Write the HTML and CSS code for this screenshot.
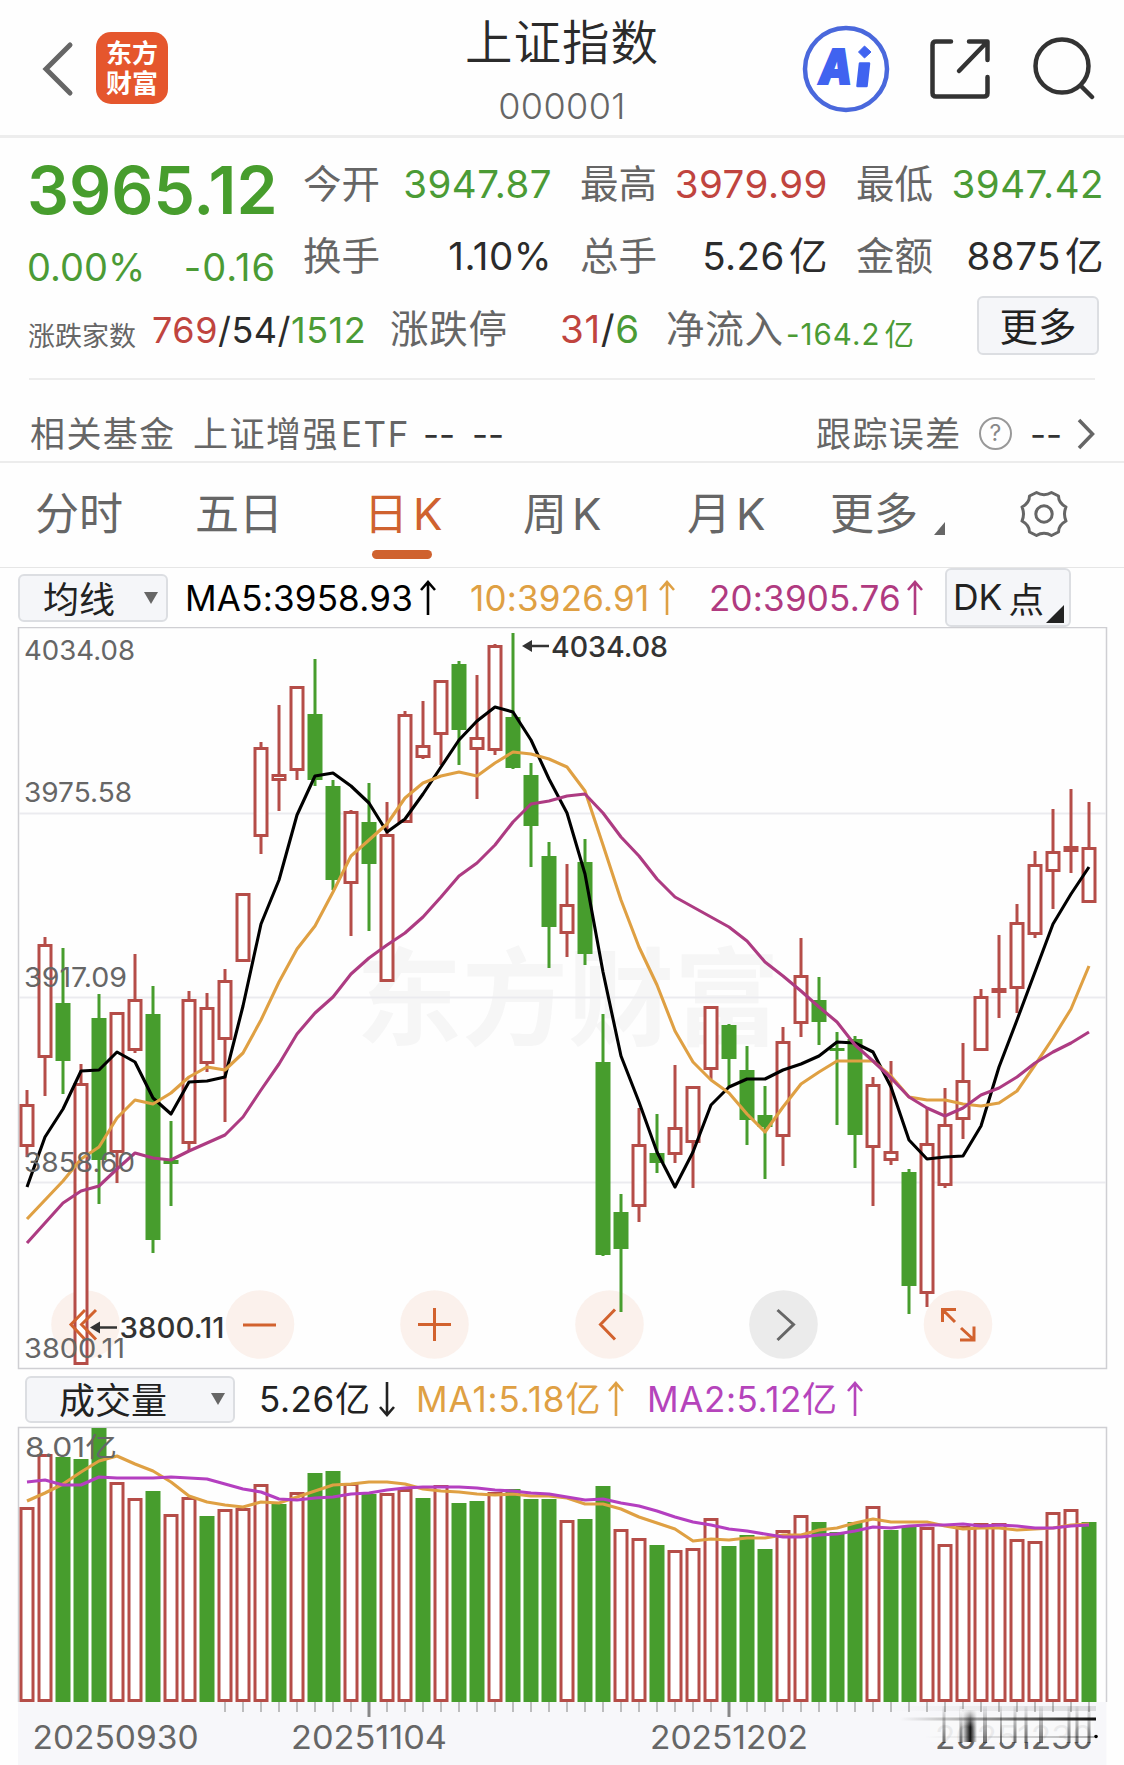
FILE: index.html
```html
<!DOCTYPE html>
<html lang="zh-CN">
<head>
<meta charset="utf-8">
<title>上证指数 000001</title>
<link rel="stylesheet" href="styles.css">
</head>
<body>
<header class="header">
  <div class="header-left">
    <svg class="back" width="34" height="56" viewBox="0 0 34 56"><path d="M29 4 5 28 29 52" fill="none" stroke="#666" stroke-width="5" stroke-linecap="round"/></svg>
    <div class="logo"><span>东方</span><span>财富</span></div>
  </div>
  <div class="title">
    <h1>上证指数</h1>
    <span class="code">000001</span>
  </div>
  <div class="header-right">
    <svg width="88" height="88" viewBox="802 25 88 88">
      <circle cx="846" cy="69" r="41" fill="#fff" stroke="#4a68dc" stroke-width="4.5"/>
      <text class="ai" x="819" y="83.500" textLength="33" lengthAdjust="spacingAndGlyphs">A</text>
      <path d="M860 63.500H869L866.500 86H857.500Z" fill="#4063f0" stroke="#4063f0" stroke-width="2.500" stroke-linejoin="round"/>
      <path d="M864.500 46 871 52 864.500 58 858.500 52Z" fill="#4063f0" stroke="#4063f0" stroke-linejoin="round"/>
    </svg>
    <svg class="share" width="64" height="64" viewBox="928 37 64 64" fill="none" stroke="#333" stroke-width="4.500" stroke-linecap="round" stroke-linejoin="round"><path d="M951 41.500H936Q932.500 41.500 932.500 45V93Q932.500 96.500 936 96.500H984Q987.500 96.500 987.500 93V77M969 41.500H987.500V60M987 42 959 71"/></svg>
    <svg class="search" width="64" height="64" viewBox="1032 36 64 64" fill="none" stroke="#333" stroke-width="4.500" stroke-linecap="round"><circle cx="1062" cy="66" r="26.500"/><path d="M1081 86 1092 97"/></svg>
  </div>
</header>

<section class="quote">
  <div class="quote-main">
    <div class="last">
      <div class="price">3965.12</div>
      <div class="change"><span class="pct">0.00%</span><span>-0.16</span></div>
    </div>
    <div class="cell"><span>今开</span><b class="down">3947.87</b></div>
    <div class="cell"><span>最高</span><b class="up">3979.99</b></div>
    <div class="cell"><span>最低</span><b class="down">3947.42</b></div>
    <div class="cell"><span>换手</span><b>1.10%</b></div>
    <div class="cell"><span>总手</span><b>5.26<i>亿</i></b></div>
    <div class="cell"><span>金额</span><b>8875<i>亿</i></b></div>
  </div>
  <div class="breadth">
    <span class="breadth-label">涨跌家数</span>
    <span class="breadth-nums"><b class="up">769</b>/54/<b class="down">1512</b></span>
    <span class="limit-label">涨跌停</span>
    <span class="limit-nums"><b class="up">31</b>/<b class="down">6</b></span>
    <span class="flow-label">净流入</span>
    <span class="flow-num">-164.2<i>亿</i></span>
    <button class="btn more">更多</button>
  </div>
</section>

<section class="fund">
  <span class="fund-label">相关基金</span>
  <span class="fund-name">上证增强<em>ETF</em></span>
  <span class="dash">--</span><span class="dash dash2">--</span>
  <span class="fund-err">跟踪误差</span>
  <span class="help">?</span>
  <span class="dash dash3">--</span>
  <svg width="20" height="34" viewBox="0 0 20 34"><path d="M3 3 16.500 17 3 31" fill="none" stroke="#666" stroke-width="3.500"/></svg>
</section>

<nav class="tabs">
  <span>分时</span><span>五日</span><span class="active">日<em>K</em></span><span>周<em>K</em></span><span>月<em>K</em></span>
  <span class="tab-more">更多<svg width="11" height="13" viewBox="0 0 11 13"><path d="M11 0V13H0Z" fill="#666"/></svg></span>
  <svg class="gear" width="50" height="50" viewBox="-25 -25 50 50" fill="none" stroke="#666" stroke-width="3" stroke-linejoin="round"><circle r="8.200"/><path d="M-7.500 -21.500Q0 -17 7.500 -21.500L14.500 -18Q14.500 -11 22 -7Q19 0 22 7Q14.500 11 14.500 18L7.500 21.500Q0 17 -7.500 21.500L-14.500 18Q-14.500 11 -22 7Q-19 0 -22 -7Q-14.500 -11 -14.500 -18Z"/></svg>
</nav>

<section class="ma-bar">
  <button class="btn select"><span>均线</span><svg width="14" height="12" viewBox="0 0 14 12"><path d="M0 0H14L7 12Z" fill="#666"/></svg></button>
  <span class="ma ma5">MA5:3958.93</span><svg class="arrow" width="16" height="36" viewBox="0 0 16 36"><path d="M8 35V2M1 10 8 2 15 10" stroke="#000"/></svg>
  <span class="ma ma10">10:3926.91</span><svg class="arrow" width="16" height="36" viewBox="0 0 16 36"><path d="M8 35V2M1 10 8 2 15 10" stroke="#dfa043"/></svg>
  <span class="ma ma20">20:3905.76</span><svg class="arrow" width="16" height="36" viewBox="0 0 16 36"><path d="M8 35V2M1 10 8 2 15 10" stroke="#b03a80"/></svg>
  <button class="btn dk"><span>DK</span><span>点</span><svg width="18" height="18" viewBox="0 0 18 18"><path d="M18 0V18H0Z" fill="#222"/></svg></button>
</section>

<svg id="kline" class="chart" width="1124" height="743" viewBox="0 627 1124 743"></svg>

<section class="vol-bar">
  <button class="btn select vol-select"><span>成交量</span><svg width="14" height="12" viewBox="0 0 14 12"><path d="M0 0H14L7 12Z" fill="#666"/></svg></button>
  <span class="ma vol">5.26<i>亿</i></span><svg class="arrow" width="16" height="36" viewBox="0 0 16 36"><path d="M8 1V34M1 26 8 34 15 26" stroke="#222"/></svg>
  <span class="ma vma1">MA1:5.18<i>亿</i></span><svg class="arrow" width="16" height="36" viewBox="0 0 16 36"><path d="M8 35V2M1 10 8 2 15 10" stroke="#dfa043"/></svg>
  <span class="ma vma2">MA2:5.12<i>亿</i></span><svg class="arrow" width="16" height="36" viewBox="0 0 16 36"><path d="M8 35V2M1 10 8 2 15 10" stroke="#b544bb"/></svg>
</section>

<svg id="volume" class="chart" width="1124" height="339" viewBox="0 1426 1124 339"></svg>
<script src="chart.js"></script>
</body>
</html>
```
FILE: styles.css
```css
* { box-sizing: border-box; }
body {
  margin: 0;
  width: 1124px;
  height: 1765px;
  overflow: hidden;
  background: #fefefe;
  color: #2b2b2b;
  font-family: Inter, "Noto Sans CJK SC", sans-serif;
  font-weight: 390;
}
b, i, em { font-weight: inherit; font-style: normal; }
svg { display: block; flex: none; }
span { white-space: nowrap; }
.up { color: #c0443e; }
.down { color: #4b9b35; }

.header {
  height: 138px;
  border-bottom: 3px solid #ededed;
  display: grid;
  grid-template-columns: 1fr 240px 1fr;
}
.header-left { display: flex; align-items: flex-start; padding: 32px 0 0 41px; }
.back { margin-top: 9px; }
.logo {
  width: 72px; height: 72px; margin-left: 21px; padding-top: 7px;
  border-radius: 15px; background: #e5562d; color: #fff;
  font-weight: 700; font-size: 26px; line-height: 30px;
  display: flex; flex-direction: column; align-items: center;
}
.title { display: flex; flex-direction: column; align-items: center; }
.title h1 { margin: 13px 0 0; font-size: 47.5px; line-height: 60px; font-weight: 350; letter-spacing: 1px; }
.code { font-size: 36px; line-height: 40px; margin-top: 13px; color: #666; font-weight: 350; letter-spacing: 0.4px; }
.header-right { display: flex; padding: 25px 28px 0 0; justify-content: flex-end; }
.share { margin: 12px 0 0 38px; }
.search { margin: 11px 0 0 40px; }
.ai { font-size: 48px; font-weight: 900; font-style: italic; fill: #4063f0; stroke: #4063f0; stroke-width: 2; }

.quote { padding: 10px 22px 0 29px; height: 243px; }
.quote-main {
  display: grid;
  grid-template-columns: 275px 247px 276px 276px;
  grid-template-rows: 72px 72px;
}
.last { grid-row: 1 / 3; padding-right: 29px; margin-left: -2px; }
.price { font-size: 66px; font-weight: 600; line-height: 85px; height: 82px; color: #479d2d; letter-spacing: 0; }
.change { display: flex; justify-content: space-between; font-size: 38px; line-height: 75px; color: #4b9b35; }
.change span + span { letter-spacing: 1px; margin-right: -1px; }
.cell { display: flex; justify-content: space-between; font-size: 38.5px; line-height: 72px; color: #666; }
.cell > span { margin-left: -1px; }
.cell:nth-child(3n+3), .cell:nth-child(3n+4) { padding-left: 30px; }
.cell b { color: #2b2b2b; letter-spacing: 0.5px; margin-right: -1px; }
.cell b.up { color: #c0443e; }
.cell b.down { color: #4b9b35; }
.cell i, .flow-num i { margin-left: 4px; }
.breadth { display: flex; height: 86px; border-bottom: 2px solid #ededed; margin: 2px 7px 0 0; line-height: 70px; font-size: 38.5px; color: #666; }
.breadth-label { font-size: 27px; width: 124px; padding-top: 8px; margin-left: -1px; }
.breadth-nums { font-size: 36px; color: #2b2b2b; width: 238px; padding-top: 1px; letter-spacing: 0.5px; }
.limit-label { width: 170px; letter-spacing: 0.7px; }
.limit-nums { color: #2b2b2b; width: 106px; letter-spacing: 0.6px; }
.flow-label { width: 120px; letter-spacing: 0.7px; }
.flow-num { font-size: 29.5px; color: #4b9b35; padding-top: 5px; letter-spacing: 1px; }
.btn {
  font-family: inherit; font-weight: inherit; color: #222; background: #f5f6f9;
  border: 2px solid #dcdee2; border-radius: 6px; padding: 0 0 3px;
  display: flex; align-items: center; flex: none;
}
.more { margin: 2px -4px 0 auto; width: 122px; height: 59px; justify-content: center; font-size: 38.5px; }

.fund {
  height: 82px; padding: 25px 28px 0 30px; border-bottom: 2px solid #ececec;
  display: flex; align-items: center; font-size: 35px; line-height: 50px; color: #666;
}
.fund-label { width: 163px; letter-spacing: 1.4px; }
.fund-name { width: 230px; letter-spacing: 1.5px; }
.fund-name em { margin-left: 2px; }
.dash { color: #333; width: 49px; font-weight: 400; }
.fund-err { margin-left: auto; width: 163px; letter-spacing: 1.4px; }
.help { width: 33px; height: 33px; border: 2px solid #999; border-radius: 50%; font-size: 23px; line-height: 29px; text-align: center; color: #888; margin-right: 18px; }
.dash3 { width: 46px; }

.tabs {
  height: 105px; border-bottom: 1px solid #e6e6e6; padding-left: 35px;
  display: grid; grid-template-columns: 160px 169px 159px 164px 143px 189px 60px;
  font-size: 44px; line-height: 102px; color: #666;
}
.tabs em { margin-left: 5px; }
.active { color: #cf622f; }
.active::after { content: ""; display: block; width: 60px; height: 9px; border-radius: 5px; background: #cf622f; margin: -15px 0 0 8px; }
.tab-more { display: flex; }
.tab-more svg { margin: 59px 0 0 16px; }
.gear { margin-top: 26px; }

.ma-bar { height: 59px; display: flex; align-items: center; padding-left: 18px; }
.select { width: 150px; height: 48px; font-size: 36px; justify-content: space-between; padding: 0 8px 3px 23px; margin-top: 1px; }
.select svg { margin-top: 2px; }
.ma { font-size: 35px; line-height: 50px; color: #000; }
.ma5 { width: 235px; margin-left: 17px; letter-spacing: 0.2px; }
.ma10 { width: 189px; margin-left: 34px; color: #dfa043; letter-spacing: 0.2px; }
.ma20 { width: 198px; margin-left: 34px; color: #b03a80; letter-spacing: 0.2px; }
.arrow path { fill: none; stroke-width: 2.6; }
.dk { width: 126px; height: 59px; margin-left: 22px; padding-left: 6px; padding-bottom: 0; font-size: 35.5px; }
.dk span + span { margin-left: 6px; }
.dk svg { margin: 33px 0 0 2px; }
.chart { width: 1124px; }

.vol-bar { height: 56px; display: flex; align-items: center; padding: 1px 0 0 25px; }
.vol-select { width: 210px; padding-left: 32px; height: 47px; }
.vol { color: #222; width: 120px; margin-left: 24px; letter-spacing: 0.6px; }
.vma1 { color: #dfa043; width: 192px; margin-left: 21px; letter-spacing: 0.9px; }
.vma2 { color: #b544bb; width: 200px; margin-left: 23px; letter-spacing: 0.6px; }

.axis-label { font-size: 27px; fill: #666; }
.mark { font-size: 28px; fill: #333; font-weight: 500; }
.date { font-size: 32px; fill: #666; }
.watermark { font-size: 106px; font-weight: 700; fill: #f6f6f6; }
.grid { stroke: #ebebef; stroke-width: 2; }
.frame { fill: none; stroke: #cfcfd3; stroke-width: 1.5; }
.up-body { fill: #fff; stroke: #b54d48; stroke-width: 3; }
.up-wick { stroke: #b54d48; stroke-width: 3; }
.down-body { fill: #479d2d; }
.down-wick { stroke: #479d2d; stroke-width: 3; }
.line { fill: none; stroke-width: 3.1; stroke-linejoin: round; }
.tool { fill: none; stroke: #d2622e; stroke-width: 3; }
```
FILE: chart.js
```js
const X = i => 27 + 18 * i;

// [direction, high, body top, body bottom, low]
const candles = [
['r',1090,1104,1147,1157],['r',937,944,1058,1096],['g',948,1003,1061,1094],['r',1064,1083,1365,1365],['g',994,1018,1160,1204],
['r',1012,1012,1153,1183],['r',954,999,1051,1053],['g',986,1014,1240,1253],['g',1121,1160,1164,1206],['r',991,999,1144,1150],
['r',993,1007,1064,1072],['r',969,980,1040,1122],['r',893,893,962,962],['r',742,747,837,854],['r',705,774,781,811],
['r',686,686,771,780],['g',659,714,780,786],['g',780,786,880,890],['r',810,811,884,936],['g',783,822,864,931],
['r',802,834,982,982],['r',711,714,823,823],['r',701,745,758,759],['r',680,680,735,765],['g',661,664,730,765],
['r',675,737,750,799],['r',644,645,751,755],['g',633,717,768,769],['g',763,775,826,867],['g',842,856,927,968],
['r',864,904,934,957],['g',839,862,954,965],['g',1014,1062,1255,1256],['g',1194,1212,1249,1312],['r',1108,1144,1207,1222],
['g',1114,1153,1163,1173],['r',1065,1127,1155,1163],['r',1086,1086,1143,1188],['r',1006,1006,1070,1079],['g',1024,1025,1059,1088],
['g',1046,1070,1120,1145],['g',1086,1115,1127,1179],['r',1027,1041,1137,1166],['r',938,975,1024,1037],['g',977,1000,1022,1045],
['g',1032,1048,1051,1125],['g',1036,1039,1135,1168],['r',1077,1084,1148,1206],['r',1061,1151,1161,1165],['g',1169,1172,1286,1314],
['r',1107,1143,1294,1307],['r',1088,1124,1186,1188],['r',1043,1080,1120,1139],['r',989,996,1051,1051],['r',935,988,993,1018],
['r',904,922,989,1013],['r',851,864,935,938],['r',809,851,872,909],['r',789,846,852,873],['r',802,847,903,903]];

const ma5 = [1187,1137,1109,1071,1070,1052,1062,1098,1114,1082,1081,1077,1006,924,880,815,776,773,786,803,832,819,794,767,740,721,707,712,740,779,813,874,972,1056,1102,1152,1187,1152,1105,1087,1079,1079,1070,1064,1056,1042,1043,1052,1087,1140,1159,1157,1156,1126,1067,1020,972,924,894,867];
const ma10 = [1219,1200,1181,1159,1147,1118,1100,1104,1093,1077,1067,1070,1053,1020,982,949,926,892,856,840,824,798,783,776,772,776,763,752,754,759,767,791,845,900,947,985,1031,1062,1080,1093,1114,1132,1107,1084,1072,1061,1061,1061,1076,1097,1100,1100,1104,1106,1103,1091,1065,1038,1009,966];
const ma20 = [1243,1223,1203,1191,1186,1169,1153,1158,1160,1151,1143,1135,1117,1090,1064,1034,1013,997,974,958,945,933,917,897,876,863,845,822,804,801,796,794,813,837,856,879,897,907,917,927,941,962,976,991,1007,1022,1045,1061,1078,1097,1108,1116,1108,1095,1088,1077,1063,1052,1043,1032];

const volDir = 'rrgggrrgrrgrrrgrggrgrrgrggrgggrggrrgrrrgggrrgggrggrrrrrrrrrg';
const volTop = [1507,1454,1457,1459,1428,1482,1498,1491,1514,1497,1516,1509,1508,1484,1504,1492,1473,1471,1483,1494,1493,1489,1498,1485,1503,1501,1492,1489,1499,1499,1520,1519,1486,1529,1538,1545,1550,1548,1518,1546,1535,1549,1530,1515,1522,1532,1522,1506,1530,1526,1527,1544,1526,1523,1523,1539,1541,1512,1509,1522];
const vma1 = [1501,1493,1484,1472,1461,1456,1464,1471,1482,1496,1502,1505,1507,1502,1503,1497,1491,1485,1484,1482,1482,1484,1489,1491,1492,1494,1495,1494,1496,1496,1498,1504,1504,1509,1517,1523,1529,1541,1539,1540,1538,1538,1535,1535,1530,1528,1523,1519,1522,1522,1522,1526,1529,1528,1528,1530,1529,1528,1525,1524];
const vma2 = [1482,1480,1485,1485,1477,1478,1478,1478,1477,1478,1479,1484,1489,1492,1499,1500,1498,1497,1494,1493,1490,1488,1487,1487,1487,1488,1490,1491,1493,1494,1497,1500,1499,1503,1506,1511,1517,1522,1525,1529,1531,1534,1537,1537,1535,1534,1531,1527,1528,1526,1525,1525,1524,1526,1525,1526,1528,1528,1526,1525];

const line = (ys, c) => `<polyline class="line" stroke="${c}" points="${ys.map((y, i) => X(i) + ',' + y).join(' ')}"/>`;
const text = (cls, x, y, w, s) => `<text class="${cls}" x="${x}" y="${y}" textLength="${w}" lengthAdjust="spacingAndGlyphs">${s}</text>`;

function candle([d, h, t, b, l], i) {
  const x = X(i), k = d === 'r' ? 'up' : 'down';
  let s = '';
  if (h < t) s += `<path class="${k}-wick" d="M${x} ${h}V${t + 1}"/>`;
  if (l > b) s += `<path class="${k}-wick" d="M${x} ${b - 1}V${l}"/>`;
  return s + (k === 'up'
    ? `<rect class="up-body" x="${x - 6}" y="${t + 1.5}" width="12" height="${b - t - 3}"/>`
    : `<rect class="down-body" x="${x - 7.5}" y="${t}" width="15" height="${b - t}"/>`);
}

let k = '<rect class="frame" x="18.5" y="627.5" width="1088" height="741"/>';
k += text('watermark', 356, 1037, 424, '东方财富');
k += [813.5, 997.5, 1182.5].map(y => `<path class="grid" d="M19 ${y}H1106"/>`).join('');
k += [85.5, 260, 434.5, 609.5, 783.5, 958].map((x, i) => `<circle cx="${x}" cy="1324.500" r="34.300" fill="${i === 4 ? '#ebebeb' : '#fbf1ec'}"/>`).join('');
k += candles.map(candle).join('');
k += line(ma5, '#000') + line(ma10, '#dfa043') + line(ma20, '#ad3b82');
k += '<path class="tool" d="M85 1310 71 1324.500 85 1339.500M96 1310 81.500 1324.500 96 1339.500M243 1325H276M418 1324.500H451M434.500 1308V1341M615 1309.500 600.500 1324.500 615 1339.500M942.500 1322V1309.500H956M943 1310 955 1322M974 1326.500V1340H960M973.500 1339.500 961 1328"/>';
k += '<path class="tool" style="stroke:#666" d="M777.500 1310 793.500 1324.500 777.500 1340"/>';
k += [['4034.08', 659.5, 111], ['3975.58', 802, 108], ['3917.09', 987, 103], ['3858.60', 1172, 111], ['3800.11', 1357.5, 101]]
  .map(([s, y, w]) => text('axis-label', 24, y, w, s)).join('');
k += '<path stroke="#333" stroke-width="2.500" d="M530 646H549"/><path fill="#333" d="M522 646 532 640V652Z"/>' + text('mark', 551, 657, 117, '4034.08');
k += '<path stroke="#333" stroke-width="2.500" d="M98 1327.500H117"/><path fill="#333" d="M90 1327.500 100 1321.500V1333.500Z"/>' + text('mark', 119.5, 1337.5, 105, '3800.11');
document.getElementById('kline').innerHTML = k;

let v = `<defs>
<linearGradient id="fadeX"><stop offset="0" stop-color="#111" stop-opacity="0"/><stop offset="1" stop-color="#111"/></linearGradient>
<linearGradient id="fadeY" x2="0" y2="1"><stop offset="0" stop-color="#333" stop-opacity=".05"/><stop offset="1" stop-color="#333" stop-opacity=".7"/></linearGradient>
<linearGradient id="blob"><stop offset="0" stop-color="#111" stop-opacity="0"/><stop offset=".55" stop-color="#111"/><stop offset="1" stop-color="#111" stop-opacity="0"/></linearGradient>
<linearGradient id="blobFade" x2="0" y2="1"><stop offset="0" stop-color="#f8f8fa"/><stop offset="1" stop-color="#f8f8fa" stop-opacity="0"/></linearGradient>
</defs>`;
v += '<path class="frame" d="M18.500 1702V1427.500H1106.500V1702"/><rect x="18" y="1702" width="1088.500" height="63" fill="#f7f7fa"/>';
v += volTop.map((t, i) => candle([volDir[i], t, t, 1702, 1702], i)).join('');
v += line(vma1, '#dfa043') + line(vma2, '#b43fc0');
v += text('axis-label', 25, 1457, 92, '8.01亿');
for (let i = 11; i < 60; i++) {
  const major = i === 19 || i === 39;
  v += `<path stroke="${major ? '#888' : '#aaa'}" stroke-width="${major ? 3 : 1.500}" d="M${X(i)} 1702V${major ? 1717 : 1712}"/>`;
}
v += text('date', 32.5, 1749, 166, '20250930') + text('date', 291, 1749, 156, '20251104') + text('date', 650, 1749, 158, '20251202') + text('date', 935, 1749, 158, '20251230');
v += '<rect x="930" y="1716" width="164" height="26" fill="#f8f8fa" opacity=".9"/>';
v += [[944, 3], [961, 3], [985, 4], [1001, 2], [1015, 3], [1026, 3], [1041, 4], [1069, 3], [1077, 3], [1089, 3]]
  .map(([x, w]) => `<rect x="${x - w / 2}" y="1706" width="${w}" height="37" fill="url(#fadeY)"/>`).join('');
v += '<rect x="962" y="1710" width="15" height="32" fill="url(#blob)"/><rect x="960" y="1709" width="18" height="18" fill="url(#blobFade)"/>';
v += '<rect x="891" y="1706" width="205" height="5" fill="url(#fadeX)" opacity=".12"/><rect x="900" y="1717.500" width="196" height="3" fill="url(#fadeX)"/><rect x="925" y="1736" width="169" height="2" fill="url(#fadeX)" opacity=".3"/><circle cx="1096" cy="1736.500" r="1.800"/>';
document.getElementById('volume').innerHTML = v;
```
